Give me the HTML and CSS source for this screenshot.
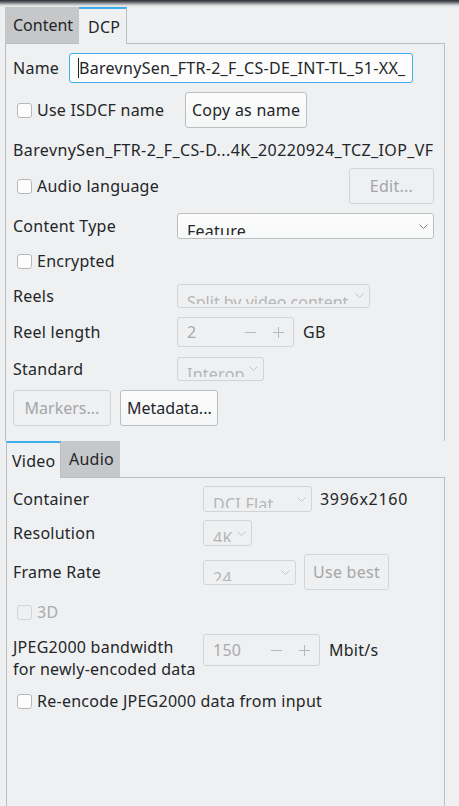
FILE: index.html
```html
<!DOCTYPE html>
<html lang="en">
<head>
<meta charset="utf-8">
<title>DCP settings</title>
<link rel="stylesheet" href="styles.css">
</head>
<body>
<div class="shade"></div>

<section class="tabwidget tabwidget-dcp">
  <div class="tabbar">
    <div class="tab tab-content">Content</div>
    <div class="tab tab-dcp is-active">DCP</div>
  </div>
  <div class="pane pane-dcp">
    <div class="row row-name">
      <span class="label label-name">Name</span>
      <div class="lineedit is-focused"><span class="caret"></span><span class="lineedit-text">BarevnySen_FTR-2_F_CS-DE_INT-TL_51-XX_</span></div>
    </div>
    <div class="row row-button">
      <label class="check check-isdcf"><span class="box"></span>Use ISDCF name</label>
      <button class="btn btn-copy">Copy as name</button>
    </div>
    <div class="row row-text">BarevnySen_FTR-2_F_CS-D...4K_20220924_TCZ_IOP_VF</div>
    <div class="row row-button">
      <label class="check"><span class="box"></span>Audio language</label>
      <button class="btn btn-edit" disabled>Edit...</button>
    </div>
    <div class="row row-combo">
      <span class="label">Content Type</span>
      <div class="combo combo-fill">
        <span class="combo-text">Feature</span>
        <svg class="chevron" width="9" height="5" viewBox="0 0 9 5"><polyline points="0.5,0.5 4.5,4.5 8.5,0.5"/></svg>
      </div>
    </div>
    <div class="row row-combo">
      <label class="check"><span class="box"></span>Encrypted</label>
    </div>
    <div class="row row-combo-sm">
      <span class="label">Reels</span>
      <div class="combo is-disabled combo-reels">
        <span class="combo-text">Split by video content</span>
        <svg class="chevron" width="9" height="5" viewBox="0 0 9 5"><polyline points="0.5,0.5 4.5,4.5 8.5,0.5"/></svg>
      </div>
    </div>
    <div class="row row-spin">
      <span class="label">Reel length</span>
      <div class="spin is-disabled spin-reel">
        <span class="spin-text">2</span>
        <svg class="spin-btn" width="11" height="11" viewBox="0 0 11 11"><line x1="0" y1="5.5" x2="11" y2="5.5"/></svg>
        <svg class="spin-btn" width="11" height="11" viewBox="0 0 11 11"><line x1="0" y1="5.5" x2="11" y2="5.5"/><line x1="5.5" y1="0" x2="5.5" y2="11"/></svg>
      </div>
      <span class="unit">GB</span>
    </div>
    <div class="row row-combo-sm">
      <span class="label">Standard</span>
      <div class="combo is-disabled combo-standard">
        <span class="combo-text">Interop</span>
        <svg class="chevron" width="9" height="5" viewBox="0 0 9 5"><polyline points="0.5,0.5 4.5,4.5 8.5,0.5"/></svg>
      </div>
    </div>
    <div class="row row-button row-dialogs">
      <button class="btn btn-dialog" disabled>Markers...</button>
      <button class="btn btn-dialog">Metadata...</button>
    </div>
  </div>
</section>

<section class="tabwidget tabwidget-video">
  <div class="tabbar">
    <div class="tab tab-video is-active is-first">Video</div>
    <div class="tab tab-audio">Audio</div>
  </div>
  <div class="pane pane-video">
    <div class="row row-combo">
      <span class="label label-wide">Container</span>
      <div class="combo is-disabled combo-container">
        <span class="combo-text">DCI Flat</span>
        <svg class="chevron" width="9" height="5" viewBox="0 0 9 5"><polyline points="0.5,0.5 4.5,4.5 8.5,0.5"/></svg>
      </div>
      <span class="unit unit-size">3996x2160</span>
    </div>
    <div class="row row-combo">
      <span class="label label-wide">Resolution</span>
      <div class="combo is-disabled combo-resolution">
        <span class="combo-text">4K</span>
        <svg class="chevron" width="9" height="5" viewBox="0 0 9 5"><polyline points="0.5,0.5 4.5,4.5 8.5,0.5"/></svg>
      </div>
    </div>
    <div class="row row-button">
      <span class="label label-wide">Frame Rate</span>
      <div class="combo is-disabled combo-rate">
        <span class="combo-text">24</span>
        <svg class="chevron" width="9" height="5" viewBox="0 0 9 5"><polyline points="0.5,0.5 4.5,4.5 8.5,0.5"/></svg>
      </div>
      <button class="btn btn-best" disabled>Use best</button>
    </div>
    <div class="row row-check3d">
      <label class="check is-disabled"><span class="box"></span>3D</label>
    </div>
    <div class="row row-bandwidth">
      <span class="label label-wide label-twoline">JPEG2000 bandwidth<br>for newly-encoded data</span>
      <div class="spin-group">
        <div class="spin is-disabled spin-bandwidth">
          <span class="spin-text">150</span>
          <svg class="spin-btn" width="11" height="11" viewBox="0 0 11 11"><line x1="0" y1="5.5" x2="11" y2="5.5"/></svg>
          <svg class="spin-btn" width="11" height="11" viewBox="0 0 11 11"><line x1="0" y1="5.5" x2="11" y2="5.5"/><line x1="5.5" y1="0" x2="5.5" y2="11"/></svg>
        </div>
        <span class="unit">Mbit/s</span>
      </div>
    </div>
    <div class="row row-combo">
      <label class="check"><span class="box"></span>Re-encode JPEG2000 data from input</label>
    </div>
  </div>
</section>
</body>
</html>
```

FILE: styles.css
```css
* {
  box-sizing: border-box;
}

html,
body {
  margin: 0;
  height: 100%;
}

body {
  display: flex;
  flex-direction: column;
  overflow: hidden;
  background: #eff0f1;
  color: #232629;
  font-family: "Noto Sans", "DejaVu Sans", sans-serif;
  font-size: 16px;
  line-height: 22px;
  letter-spacing: 0.25px;
}

/* shadow cast by the window header above */
.shade {
  flex: none;
  height: 7px;
  background: linear-gradient(#2b2f33 0, #5d6166 2px, #cfd1d3 5px, #eff0f1 7px);
}

/* ---------- tab widgets ---------- */
.tabwidget {
  display: flex;
  flex-direction: column;
  flex: none;
}

.tabwidget-dcp {
  margin-left: 5px;
  width: 440px;
  height: 434px;
  overflow: hidden;
}

.tabwidget-video {
  flex: 1;
  min-height: 0;
  margin-left: 6px;
  width: 439px;
}

.tabbar {
  position: relative;
  z-index: 1;
  display: flex;
  flex: none;
  height: 36px;
}

.tab {
  display: flex;
  align-items: center;
  padding-left: 8px;
  white-space: nowrap;
  background: #c6c7c8;
}

.tab.is-active {
  height: 37px;
  margin-bottom: -1px;
  background: #eff0f1;
  border-top: 2px solid #3daee9;
  border-right: 1px solid #bcbebf;
}

.tab.is-active.is-first {
  border-left: 1px solid #bcbebf;
}

.tab-content { width: 74px; letter-spacing: 0; }
.tab-dcp { width: 48px; padding-left: 9px; }
.tab-video { width: 55px; padding-left: 5px; }
.tab-audio { width: 59px; }

.pane {
  flex: 1;
  display: flex;
  flex-direction: column;
  border: 1px solid #bcbebf;
  border-bottom: none;
}

.pane-dcp {
  gap: 9px;
  padding: 9px 10px 0 7px;
}

.pane-video {
  gap: 8px;
  padding: 8px 10px 0 6px;
}

/* ---------- form rows ---------- */
.row {
  display: flex;
  flex: none;
  align-items: center;
  white-space: nowrap;
}

.row-name { height: 30px; }
.row-button { height: 36px; }
.row-combo { height: 26px; }
.row-combo-sm { height: 25px; }
.row-spin { height: 30px; }
.row-check3d { height: 28px; }

.row-text {
  height: 22px;
  padding-top: 4px;
  letter-spacing: 0.4px;
}

.row-bandwidth {
  height: 46px;
  align-items: flex-start;
}

.row-dialogs {
  gap: 9px;
}

.label {
  flex: none;
  width: 164px;
}

.label-name {
  width: 56px;
}

.label-wide {
  width: 190px;
}

.label-twoline {
  margin-top: 2px;
  line-height: 22px;
}

.unit {
  margin-left: 9px;
}

.unit-size {
  margin-left: 8px;
  letter-spacing: 0.7px;
}

/* ---------- line edit ---------- */
.lineedit {
  display: flex;
  align-items: center;
  width: 344px;
  height: 30px;
  padding: 0 8px;
  overflow: hidden;
  background: #fcfcfc;
  border: 1px solid #bcbebf;
  border-radius: 3px;
}

.lineedit.is-focused {
  border-color: #3daee9;
}

.caret {
  flex: none;
  width: 1px;
  height: 20px;
  background: #232629;
}

.lineedit-text {
  white-space: nowrap;
  letter-spacing: 0.3px;
}

/* ---------- check boxes ---------- */
.check {
  display: flex;
  align-items: center;
  gap: 5px;
  padding-left: 4px;
}

.check-isdcf {
  width: 172px;
  flex: none;
}

.box {
  flex: none;
  width: 15px;
  height: 15px;
  background: #fcfcfc;
  border: 1px solid #b5b7b9;
  border-radius: 3px;
}

.check.is-disabled {
  color: #a9abad;
}

.check.is-disabled .box {
  background: #eff0f1;
  border-color: #d3d4d5;
}

/* ---------- push buttons ---------- */
.btn {
  flex: none;
  height: 36px;
  min-width: 84px;
  padding: 0 6px;
  font: inherit;
  letter-spacing: inherit;
  color: #232629;
  background: linear-gradient(#fcfcfc, #f5f6f7);
  border: 1px solid #bcbec0;
  border-radius: 3px;
}

.btn:disabled {
  color: #a4a6a8;
  background: #eff0f1;
  border-color: #d4d5d6;
}

.btn-copy {
  width: 122px;
}

.btn-edit {
  margin-left: auto;
  width: 85px;
}

.btn-dialog {
  width: 98px;
  letter-spacing: 0;
}

.btn-best {
  width: 85px;
  margin-left: 8px;
}

/* ---------- combo boxes ---------- */
.combo {
  flex: none;
  display: flex;
  align-items: center;
  height: 26px;
  padding: 0 5px 0 9px;
  overflow: hidden;
  background: linear-gradient(#fdfdfd, #f7f8f8);
  border: 1px solid #bcbec0;
  border-radius: 3px;
}

/* the current item sits low and is clipped by the frame's inner margin */
.combo-text {
  flex: 1;
  align-self: flex-start;
  height: calc(100% - 3px);
  padding-top: 7px;
  overflow: hidden;
  line-height: 20px;
  white-space: nowrap;
}

.chevron {
  flex: none;
  margin-left: 4px;
  fill: none;
  stroke: #7c7f82;
  stroke-width: 1;
}

.combo.is-disabled {
  color: #b4b6b8;
  background: #eff0f1;
  border-color: #d3d4d5;
}

.combo.is-disabled .chevron {
  stroke: #c3c5c7;
}

.combo-fill { flex: 1; }
.combo-reels { width: 193px; height: 24px; }
.combo-reels .combo-text { letter-spacing: 0; }
.combo-standard { width: 87px; height: 24px; }
.combo-standard .combo-text { padding-top: 6px; }
.combo-container { width: 109px; }
.combo-resolution { width: 49px; }
.combo-rate { width: 93px; height: 25px; }

/* ---------- spin boxes ---------- */
.spin {
  flex: none;
  display: flex;
  align-items: center;
  height: 30px;
  padding: 0 9px;
  border: 1px solid #d3d4d5;
  border-radius: 3px;
}

.spin.is-disabled {
  color: #a8aaac;
}

.spin-text {
  flex: 1;
}

.spin-btn {
  flex: none;
  stroke: #b6b8ba;
  stroke-width: 1;
}

.spin-btn + .spin-btn {
  margin-left: 17px;
}

.spin-reel {
  width: 117px;
}

.spin-group {
  display: flex;
  align-items: center;
}

.spin-bandwidth {
  width: 117px;
  height: 32px;
}
```
